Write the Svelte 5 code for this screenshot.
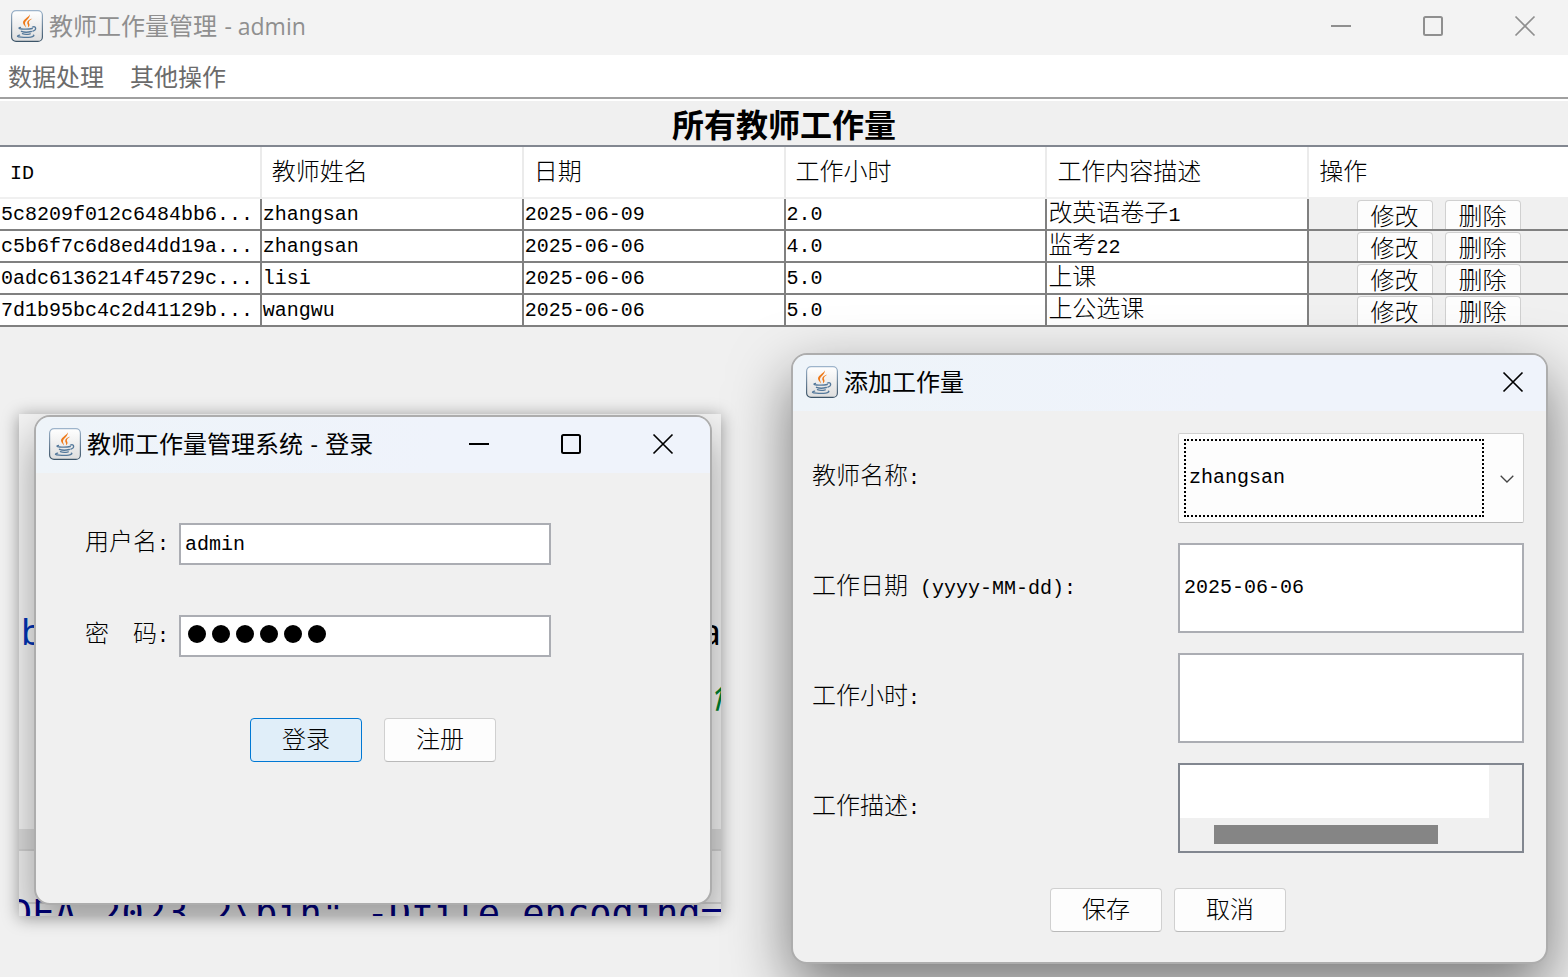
<script lang="ts">
	interface Workload {
		id: string;
		teacher: string;
		date: string;
		hours: string;
		content: string;
	}

	const menus = ['数据处理', '其他操作'];
	const columns = ['ID', '教师姓名', '日期', '工作小时', '工作内容描述', '操作'];

	const rows: Workload[] = [
		{ id: '5c8209f012c6484bb6...', teacher: 'zhangsan', date: '2025-06-09', hours: '2.0', content: '改英语卷子1' },
		{ id: 'c5b6f7c6d8ed4dd19a...', teacher: 'zhangsan', date: '2025-06-06', hours: '4.0', content: '监考22' },
		{ id: '0adc6136214f45729c...', teacher: 'lisi', date: '2025-06-06', hours: '5.0', content: '上课' },
		{ id: '7d1b95bc4c2d41129b...', teacher: 'wangwu', date: '2025-06-06', hours: '5.0', content: '上公选课' }
	];

	let username = $state('admin');
	let password = $state('123456');
	let teacher = $state('zhangsan');
	let workDate = $state('2025-06-06');
	let workHours = $state('');
	let description = $state('');

	// split into runs of Chinese and Latin, which are set at different sizes
	function runs(text: string) {
		return (text.match(/[\u4e00-\u9fff]+|[^\u4e00-\u9fff]+/g) ?? []).map((part) => ({
			part,
			han: /[\u4e00-\u9fff]/.test(part)
		}));
	}
</script>

{#snippet mixed(text: string)}
	{#each runs(text) as run}<span class:han={run.han} class:latin={!run.han}>{run.part}</span>{/each}
{/snippet}

{#snippet javaIcon()}
	<svg class="java-icon" viewBox="0 0 32 32" aria-hidden="true">
		<defs>
			<linearGradient id="tile-fill" x1="0" y1="0" x2="0" y2="1">
				<stop offset="0" stop-color="#ffffff" />
				<stop offset="1" stop-color="#dedede" />
			</linearGradient>
			<linearGradient id="tile-edge" x1="0" y1="0" x2="0" y2="1">
				<stop offset="0" stop-color="#9db4cb" />
				<stop offset="1" stop-color="#3c5468" />
			</linearGradient>
		</defs>
		<rect x="0.6" y="0.6" width="30.8" height="30.8" rx="4.5" fill="url(#tile-fill)" stroke="url(#tile-edge)" stroke-width="1.2" />
		<path d="M18.6 3.8c1 3-6.6 5-6.6 8.800 0 2.200 2.300 3.400 3.200 5.200-.4-2.200-1.400-3.200-1.200-4.800.3-2.800 6-4.900 4.600-9.200z" fill="#ee7a1b" />
		<path d="M21.400 8.600c-3 .8-5.400 2.200-5.200 4.400.1 1.500 1.500 2 .7 4.400 2.200-1.600 1.800-3 1.100-4.200-.8-1.600.9-3 3.400-4.600z" fill="#ee7a1b" />
		<g fill="none" stroke="#55799b" stroke-linecap="round">
			<path d="M9.500 17.300c-2.200.5-2.200 1.500 1 1.700 3.500.3 8 .2 10.800-.5" stroke-width="1.300" />
			<path d="M21.500 17c3.800-1.300 4.400 3 .4 4.200" stroke-width="1.300" />
			<path d="M10.500 21.400c2.500 1 7 .9 9.800.1" stroke-width="1.500" />
			<path d="M11.400 23.700c2 .9 5.500.8 7.900.1" stroke-width="1.300" />
			<path d="M8.700 25.200c-3.400.6-3 1.700 1.600 2 5.500.4 11-.2 12.400-1.200.5-.4.1-.8-.4-.9" stroke-width="1.200" />
		</g>
	</svg>
{/snippet}

{#snippet minMax()}
	<button type="button" aria-label="最小化">
		<svg viewBox="0 0 20 20"><path d="M0 10h20" /></svg>
	</button>
	<button type="button" aria-label="最大化">
		<svg viewBox="0 0 20 20"><rect x="1" y="1" width="18" height="18" rx="1.5" /></svg>
	</button>
{/snippet}

{#snippet closeButton()}
	<button type="button" aria-label="关闭">
		<svg viewBox="0 0 20 20"><path d="M0.500 0.500l19 19M19.500 0.500l-19 19" stroke-width="1.700" /></svg>
	</button>
{/snippet}

<div class="desktop">
	<header class="titlebar main-titlebar">
		{@render javaIcon()}
		<h1>教师工作量管理 <span class="ui-latin">- admin</span></h1>
		<div class="controls">
			{@render minMax()}
			{@render closeButton()}
		</div>
	</header>

	<nav class="menubar">
		{#each menus as menu}
			<button type="button">{menu}</button>
		{/each}
	</nav>

	<main>
		<h2>所有教师工作量</h2>
		<table>
			<colgroup>
				{#each columns.slice(1) as _}
					<col class="data-col" />
				{/each}
				<col />
			</colgroup>
			<thead>
				<tr>
					{#each columns as column}
						<th scope="col">{@render mixed(column)}</th>
					{/each}
				</tr>
			</thead>
			<tbody>
				{#each rows as row}
					<tr>
						{#each [row.id, row.teacher, row.date, row.hours, row.content] as cell}
							<td><div class="cell">{@render mixed(cell)}</div></td>
						{/each}
						<td class="actions">
							<div class="cell">
								<button type="button" class="btn small">修改</button>
								<button type="button" class="btn small">删除</button>
							</div>
						</td>
					</tr>
				{/each}
			</tbody>
		</table>
	</main>

	<div class="editor">
		<div class="code" aria-hidden="true">
			<p class="line"><span class="keyword">b</span><span class="ident">a</span></p>
			<p class="line comment"><i>作</i></p>
		</div>
		<div class="splitter"></div>
		<div class="toolbar"></div>
		<p class="console">DEA 2023.2\bin" -Dfile.encoding=</p>

		<section class="window login" aria-labelledby="login-title">
			<header class="titlebar">
				{@render javaIcon()}
				<h2 id="login-title">教师工作量管理系统 <span class="ui-latin">-</span> 登录</h2>
				<div class="controls">
					{@render minMax()}
					{@render closeButton()}
				</div>
			</header>
			<form onsubmit={(e) => e.preventDefault()}>
				<div class="field">
					<label for="username">{@render mixed('用户名:')}</label>
					<input id="username" type="text" bind:value={username} />
				</div>
				<div class="field">
					<label for="password">{@render mixed('密  码:')}</label>
					<div class="secret">
						<input id="password" type="password" bind:value={password} />
						<div class="dots" aria-hidden="true">
							{#each password as _}<span></span>{/each}
						</div>
					</div>
				</div>
				<div class="buttons">
					<button type="submit" class="btn primary">登录</button>
					<button type="button" class="btn">注册</button>
				</div>
			</form>
		</section>
	</div>

	<section class="window add" aria-labelledby="add-title">
		<header class="titlebar">
			{@render javaIcon()}
			<h2 id="add-title">添加工作量</h2>
			<div class="controls">{@render closeButton()}</div>
		</header>
		<form onsubmit={(e) => e.preventDefault()}>
			<div class="grid">
				<label for="teacher">{@render mixed('教师名称:')}</label>
				<div class="combo">
					<select id="teacher" bind:value={teacher}>
						<option>zhangsan</option>
						<option>lisi</option>
						<option>wangwu</option>
					</select>
					<span class="focus-ring"></span>
					<svg class="chevron" viewBox="0 0 14 8"><path d="M0.700 0.700l6.300 6.300 6.300-6.300" /></svg>
				</div>

				<label for="work-date">{@render mixed('工作日期 (yyyy-MM-dd):')}</label>
				<input id="work-date" type="text" bind:value={workDate} />

				<label for="work-hours">{@render mixed('工作小时:')}</label>
				<input id="work-hours" type="text" bind:value={workHours} />

				<label for="description">{@render mixed('工作描述:')}</label>
				<div class="scroll-pane">
					<textarea id="description" bind:value={description}></textarea>
					<div class="thumb"></div>
				</div>
			</div>
			<div class="buttons">
				<button type="submit" class="btn">保存</button>
				<button type="button" class="btn">取消</button>
			</div>
		</form>
	</section>
</div>

<style>
	:global(body) {
		margin: 0;
		background: #f0f0f0;
	}

	.desktop {
		position: relative;
		min-height: 100vh;
		overflow: hidden;
		background: #f0f0f0;
		color: #000;
		font-family: 'Liberation Mono', 'Noto Sans CJK SC', monospace;
		font-size: 20px;
		font-weight: 300;
		line-height: 30px;
	}

	h1,
	h2,
	p {
		margin: 0;
	}

	button,
	input,
	select,
	textarea {
		box-sizing: border-box;
		margin: 0;
		font: inherit;
		color: inherit;
	}

	.han,
	.latin {
		white-space: pre;
	}

	.han {
		font-family: 'Noto Sans CJK SC', sans-serif;
		font-size: 24px;
		line-height: 22px;
	}

	.ui-latin {
		margin: 0 2px;
		font-family: 'Open Sans', 'Noto Sans', sans-serif;
		font-size: 23px;
	}

	/* window chrome */
	.titlebar {
		box-sizing: border-box;
		display: flex;
		align-items: center;
		height: 56px;
		padding: 0 0 2px 13px;
		background: linear-gradient(100deg, #eef4f9, #eff3fb 60%);
	}

	.titlebar h1,
	.titlebar h2 {
		flex: 1;
		margin-left: 6px;
		padding-bottom: 2px;
		font-family: 'Noto Sans CJK SC', sans-serif;
		font-size: 24px;
		font-weight: 400;
		line-height: 32px;
		white-space: nowrap;
	}

	.main-titlebar {
		height: 55px;
		padding: 0 0 3px 11px;
		background: #f3f3f3;
		color: #8f8f8f;
	}

	.java-icon {
		flex: none;
		width: 32px;
		height: 32px;
	}

	.controls {
		display: flex;
		gap: 6px;
		height: 100%;
	}

	.controls button {
		display: flex;
		align-items: center;
		justify-content: center;
		width: 86px;
		padding: 0;
		border: none;
		background: none;
	}

	.controls svg {
		width: 20px;
		height: 20px;
		overflow: visible;
		fill: none;
		stroke: currentColor;
		stroke-width: 2;
	}

	.menubar {
		display: flex;
		gap: 26px;
		padding: 6px 8px;
		border-bottom: 2px solid #a0a0a0;
		background: #fff;
	}

	.menubar button {
		padding: 0;
		border: none;
		background: none;
		color: #6b6b6b;
		font-family: 'Noto Sans CJK SC', sans-serif;
		font-size: 24px;
		font-weight: 400;
		line-height: 30px;
	}

	/* table */
	main {
		border-top: 2px solid #fff;
	}

	main h2 {
		font-family: 'Noto Sans CJK SC', sans-serif;
		font-size: 32px;
		font-weight: 700;
		line-height: 44px;
		text-align: center;
	}

	table {
		width: 100%;
		border-top: 2px solid #828790;
		border-spacing: 0;
		table-layout: fixed;
	}

	.data-col {
		width: 16.7%;
	}

	th {
		box-sizing: border-box;
		height: 52px;
		padding: 4px 0 0 10px;
		border-right: 2px solid #ebebeb;
		border-bottom: 2px solid #f0f0f0;
		background: #fff;
		font-weight: 300;
		text-align: left;
	}

	th:last-child {
		border-right: none;
	}

	td {
		padding: 0;
		border-right: 2px solid #808080;
		border-bottom: 2px solid #808080;
		background: #fff;
	}

	.cell {
		box-sizing: border-box;
		height: 30px;
		padding: 1px 0 0 1px;
		line-height: 29px;
		white-space: nowrap;
	}

	.actions {
		border-right: none;
		background: #f0f0f0;
	}

	.actions .cell {
		display: flex;
		justify-content: center;
		gap: 12px;
		padding: 1px 0 0;
	}

	.btn {
		flex: none;
		width: 112px;
		height: 44px;
		padding: 0 0 4px;
		border: 1px solid #d0d0d0;
		border-bottom-color: #b9b9b9;
		border-radius: 4px;
		background: #fdfdfd;
		font-family: 'Noto Sans CJK SC', sans-serif;
		font-size: 24px;
		line-height: 30px;
	}

	.btn.small {
		width: 76px;
		height: 29px;
		padding: 0;
		border-bottom: none;
		border-radius: 4px 4px 0 0;
		line-height: 28px;
	}

	.btn.primary {
		border-color: #0078d4;
		background: #e0eef9;
	}

	/* editor showing round the login window */
	.editor {
		position: absolute;
		top: 414px;
		left: 19px;
		display: flex;
		flex-direction: column;
		width: 702px;
		height: 502px;
		overflow: hidden;
		background: #ededed;
		box-shadow: 0 2px 16px rgba(0, 0, 0, 0.4);
	}

	.code {
		flex: none;
		box-sizing: border-box;
		height: 415px;
		padding: 188px 0 0 2px;
		background: #f2f2f2;
	}

	.line {
		display: flex;
		justify-content: space-between;
		font-family: 'Noto Sans', sans-serif;
		font-size: 36px;
		font-weight: 400;
		line-height: 60px;
	}

	.keyword {
		color: #0033b3;
	}

	.comment {
		justify-content: flex-end;
		margin-right: -25px;
		color: #00802b;
		font-family: 'Noto Sans CJK SC', sans-serif;
	}

	.splitter {
		flex: none;
		height: 20px;
		border-bottom: 2px solid #cfcfcf;
		background: #dadada;
	}

	.toolbar {
		flex: none;
		height: 51px;
		border-bottom: 2px solid #cfcfcf;
		background: #ededed;
	}

	.console {
		flex: none;
		margin: -12px 0 0 -9px;
		color: #00007f;
		font-family: 'DejaVu Sans Mono', monospace;
		font-size: 37px;
		font-weight: 400;
		line-height: 44px;
		white-space: nowrap;
	}

	/* floating windows */
	.window {
		position: absolute;
		box-sizing: border-box;
		overflow: hidden;
		border: 2px solid #adadad;
		border-radius: 16px;
		background: #f0f0f0;
	}

	.login {
		top: 1px;
		left: 15px;
		width: 678px;
		box-shadow: 0 20px 40px rgba(0, 0, 0, 0.35);
	}

	.login .titlebar {
		padding-right: 4px;
	}

	.login form {
		padding: 50px 0 141px;
	}

	.field {
		display: flex;
		align-items: center;
		gap: 10px;
		margin-bottom: 50px;
		padding-left: 49px;
	}

	input {
		padding: 0 4px;
		border: 2px solid #abadb3;
		border-radius: 0;
		background: #fff;
		outline: none;
	}

	.field input {
		width: 372px;
		height: 42px;
	}

	.secret {
		position: relative;
		display: flex;
	}

	#password {
		color: transparent;
		caret-color: #000;
	}

	.dots {
		position: absolute;
		top: 10px;
		left: 9px;
		display: flex;
		gap: 6px;
		pointer-events: none;
	}

	.dots span {
		width: 18px;
		height: 18px;
		border-radius: 50%;
		background: #000;
	}

	.buttons {
		display: flex;
		justify-content: center;
		gap: 12px;
	}

	.login .buttons {
		gap: 22px;
		padding-top: 11px;
	}

	.add {
		top: 353px;
		left: 791px;
		width: 757px;
		box-shadow: 0 24px 60px rgba(0, 0, 0, 0.5);
	}

	.add .controls button {
		width: 66px;
	}

	.add form {
		padding: 22px 22px 30px 19px;
	}

	.grid {
		display: grid;
		grid-template-columns: 1fr 1fr;
		grid-auto-rows: 90px;
		gap: 20px;
		margin-bottom: 35px;
	}

	.grid label {
		align-self: center;
	}

	.combo {
		position: relative;
		display: grid;
	}

	select {
		padding: 0 40px 0 10px;
		border: 1px solid #d0d0d0;
		border-bottom-color: #b9b9b9;
		border-radius: 2px;
		background: #fdfdfd;
		appearance: none;
		outline: none;
	}

	.focus-ring {
		position: absolute;
		inset: 6px 40px 6px 6px;
		border: 2px dotted #000;
		pointer-events: none;
	}

	.chevron {
		position: absolute;
		top: 42px;
		right: 10px;
		width: 14px;
		height: 8px;
		fill: none;
		stroke: #444;
		stroke-width: 1.3;
		pointer-events: none;
	}

	.scroll-pane {
		display: grid;
		grid-template: 1fr 33px / 1fr 33px;
		border: 2px solid #828790;
	}

	textarea {
		width: 100%;
		height: 100%;
		padding: 4px;
		border: none;
		background: #fff;
		resize: none;
		outline: none;
	}

	.thumb {
		grid-row: 2;
		height: 19px;
		margin: 7px 51px 0 34px;
		background: #858585;
	}
</style>
